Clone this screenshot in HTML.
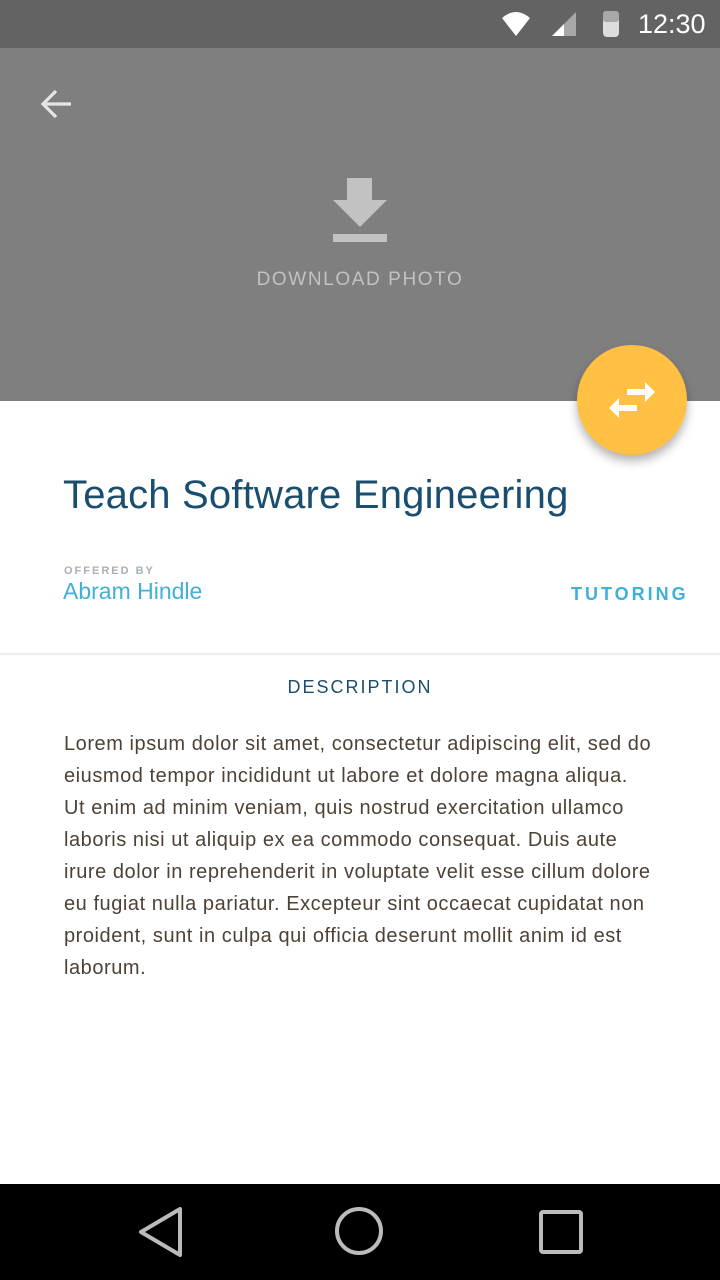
<!DOCTYPE html>
<html><head><meta charset="utf-8"><style>
*{margin:0;padding:0;box-sizing:border-box}
body{width:720px;height:1280px;position:relative;background:#fff;font-family:"Liberation Sans",sans-serif;overflow:hidden}
.abs{position:absolute}
</style></head><body>
<div class="abs" style="left:0;top:0;width:720px;height:48px;background:#636363"></div>
<svg class="abs" style="left:490px;top:0" width="230" height="48">
<path d="M12 18 Q26 6 40 18 L26 36 Z" fill="#fff"/>
<path d="M62 36 L86 12 L86 36 Z" fill="#a8a8a8"/><path d="M62 36 L74 24 L74 36 Z" fill="#fff"/>
<rect x="113" y="11" width="16" height="26" rx="4" fill="#ddd"/><rect x="113" y="11" width="16" height="11" rx="3" fill="#a8a8a8"/>
<text x="148" y="33" font-family="Liberation Sans" font-size="27" fill="#fff">12:30</text>
</svg>
<div class="abs" style="left:0;top:48px;width:720px;height:353px;background:#7f7f7f"></div>
<svg class="abs" style="left:38px;top:86px" width="38" height="36"><path d="M33 18 H5 M18 5 L5 18 L18 31" stroke="#e6e6e6" stroke-width="3.2" fill="none"/></svg>
<svg class="abs" style="left:330px;top:175px" width="60" height="70"><rect x="17" y="3" width="25" height="23" fill="#c2c2c2"/><path d="M3 25 H57 L30 52 Z" fill="#c2c2c2"/><rect x="3" y="59" width="54" height="8" fill="#c2c2c2"/></svg>
<div class="abs" style="left:0;top:269px;width:720px;text-align:center;font-size:19px;letter-spacing:1.6px;color:#c2c2c2">DOWNLOAD PHOTO</div>
<div class="abs" style="left:577px;top:345px;width:110px;height:110px;border-radius:50%;background:#ffc043;box-shadow:0 6px 10px rgba(0,0,0,.3)"></div>
<svg class="abs" style="left:0;top:0" width="720" height="480"><path d="M627 389 H645 V382 L655 392 L645 402 V395 H627 Z" fill="#fff"/><path d="M637 405 H619 V398 L609 408 L619 418 V411 H637 Z" fill="#fff"/></svg>
<div class="abs" style="left:63px;top:473px;font-size:40px;letter-spacing:0.2px;color:#1a4e6e;white-space:nowrap">Teach Software Engineering</div>
<div class="abs" style="left:64px;top:565px;font-size:11px;letter-spacing:2px;color:#a8b0b8;font-weight:bold">OFFERED BY</div>
<div class="abs" style="left:63px;top:578px;font-size:23px;color:#3fb0d8">Abram Hindle</div>
<div class="abs" style="left:571px;top:584px;font-size:18px;letter-spacing:3px;color:#3fb0d8;font-weight:bold">TUTORING</div>
<div class="abs" style="left:0;top:653px;width:720px;height:2px;background:#eee"></div>
<div class="abs" style="left:0;top:677px;width:720px;text-align:center;font-size:18px;letter-spacing:2px;color:#1a4e6e">DESCRIPTION</div>
<div class="abs" style="left:64px;top:728px;width:650px;font-size:20px;letter-spacing:0.55px;line-height:32px;color:#4e4236;white-space:nowrap">Lorem ipsum dolor sit amet, consectetur adipiscing elit, sed do<br>eiusmod tempor incididunt ut labore et dolore magna aliqua.<br>Ut enim ad minim veniam, quis nostrud exercitation ullamco<br>laboris nisi ut aliquip ex ea commodo consequat. Duis aute<br>irure dolor in reprehenderit in voluptate velit esse cillum dolore<br>eu fugiat nulla pariatur. Excepteur sint occaecat cupidatat non<br>proident, sunt in culpa qui officia deserunt mollit anim id est<br>laborum.</div>
<div class="abs" style="left:0;top:1184px;width:720px;height:96px;background:#000"></div>
<svg class="abs" style="left:0;top:1184px" width="720" height="96">
<path d="M180 25 L141 48 L180 71 Z" stroke="#bbb" stroke-width="4" fill="none" stroke-linejoin="round"/>
<circle cx="359" cy="47" r="22" stroke="#bbb" stroke-width="4" fill="none"/>
<rect x="541" y="28" width="40" height="40" rx="2" stroke="#bbb" stroke-width="4" fill="none"/>
</svg>
</body></html>
